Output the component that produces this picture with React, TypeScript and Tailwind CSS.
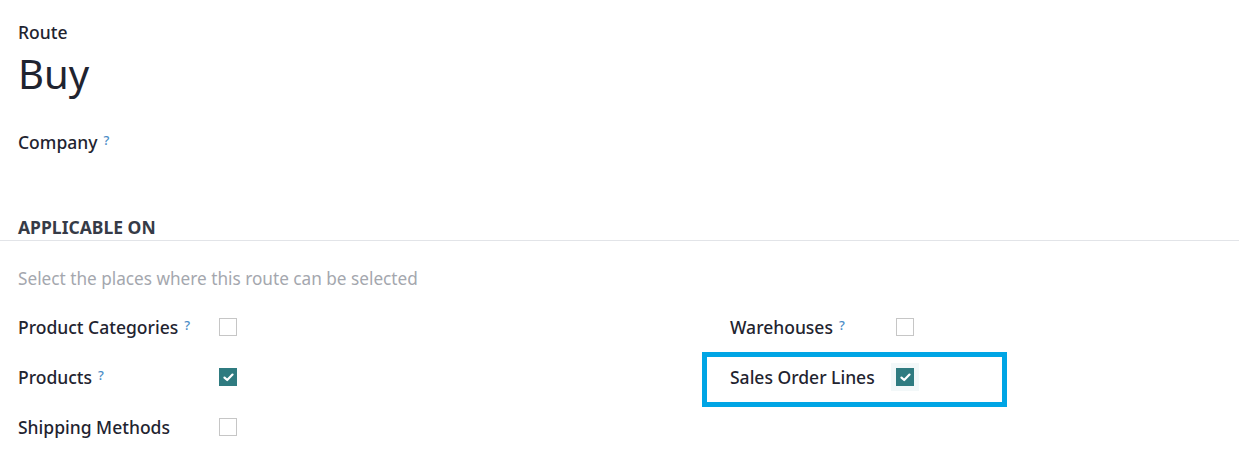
import React from "react";

const Help = () => (
  <sup className="ml-[6px] text-[13px] text-[#4a8cc6] relative -top-[4px]">?</sup>
);

function Box({ checked, halo }: { checked?: boolean; halo?: boolean }) {
  return (
    <div
      className={`flex items-center justify-center w-[28px] h-[28px] -m-[5px] ${
        halo ? "bg-[#f3f8f9]" : ""
      }`}
    >
      <div
        className={`w-[18px] h-[18px] flex items-center justify-center ${
          checked ? "bg-[#2f7b80]" : "border border-[#c6c6c6] bg-white"
        }`}
      >
        {checked && (
          <svg width="11" height="9" viewBox="0 0 11 9">
            <path
              d="M1.5 4.6 L4.2 7 L9.5 1.6"
              stroke="white"
              strokeWidth="2.2"
              fill="none"
              strokeLinecap="round"
              strokeLinejoin="round"
            />
          </svg>
        )}
      </div>
    </div>
  );
}

function Row({
  label,
  help,
  checked,
  labelWidth,
  halo,
}: {
  label: string;
  help?: boolean;
  checked?: boolean;
  labelWidth: string;
  halo?: boolean;
}) {
  return (
    <div className="flex items-center h-[50px]">
      <div className={`${labelWidth} font-medium text-[#1f2430]`}>
        {label}
        {help && <Help />}
      </div>
      <Box checked={checked} halo={halo} />
    </div>
  );
}

export default function App() {
  return (
    <div
      className="w-[1239px] h-[468px] bg-white overflow-hidden text-[17.5px] text-[#1f2430]"
      style={{ fontFamily: '"Noto Sans", "Open Sans", sans-serif' }}
    >
      <div className="px-[18px] pt-[20px]">
        <div className="font-medium leading-[24px]">Route</div>
        <div className="text-[40px] leading-[56px] mt-[2px]">Buy</div>
        <div className="mt-[28px] font-medium leading-[24px]">
          Company
          <Help />
        </div>
      </div>

      <div className="mt-[61px] border-b border-[#e2e4e8] pb-[1px]">
        <div className="px-[18px] font-bold text-[#363b47] leading-[24px]">
          APPLICABLE ON
        </div>
      </div>

      <div className="px-[18px] pt-[26px] text-[17.2px] text-[#a4a7ae] leading-[24px]">
        Select the places where this route can be selected
      </div>

      <div className="flex pt-[11px]">
        <div className="w-[730px] pl-[18px]">
          <Row label="Product Categories" help labelWidth="w-[201px]" />
          <Row label="Products" help checked labelWidth="w-[201px]" />
          <Row label="Shipping Methods" labelWidth="w-[201px]" />
        </div>
        <div className="flex-1">
          <Row label="Warehouses" help labelWidth="w-[166px]" />
          <div className="relative">
            <Row label="Sales Order Lines" checked halo labelWidth="w-[166px]" />
            <div className="absolute -left-[28px] top-0 w-[305px] h-[55px] border-[5px] border-[#00a5e5] pointer-events-none" />
          </div>
        </div>
      </div>
    </div>
  );
}
